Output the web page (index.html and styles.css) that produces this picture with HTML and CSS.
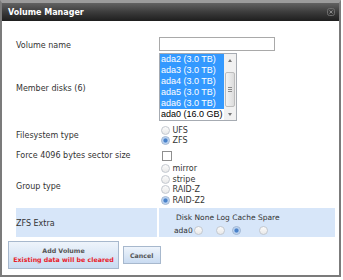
FILE: index.html
```html
<!DOCTYPE html>
<html lang="en">
<head>
    <meta charset="UTF-8">
    <title>Volume Manager</title>
    <link rel="stylesheet" href="styles.css">
</head>
<body>

<div class="window">
    <div class="titlebar">
        <span class="title">Volume Manager</span>
        <svg class="close" width="8" height="8" viewBox="0 0 8 8">
            <rect x="0.5" y="0.5" width="7" height="7" rx="2" fill="none" stroke="#6e6e6e"/>
            <path d="M2.5 2.5 L5.5 5.5 M5.5 2.5 L2.5 5.5" stroke="#8a8a8a" stroke-width="1"/>
        </svg>
    </div>

    <div class="content">
        <div class="form">
            <div class="label">Volume name</div>
            <div class="field"><input class="text" type="text"></div>

            <div class="label">Member disks (6)</div>
            <div class="field">
                <div class="listbox">
                    <div class="options">
                        <div class="option selected">ada2 (3.0 TB)</div>
                        <div class="option selected">ada3 (3.0 TB)</div>
                        <div class="option selected">ada4 (3.0 TB)</div>
                        <div class="option selected">ada5 (3.0 TB)</div>
                        <div class="option selected">ada6 (3.0 TB)</div>
                        <div class="option">ada0 (16.0 GB)</div>
                    </div>
                    <div class="scrollbar">
                        <span class="arrow up"></span>
                        <span class="thumb"><i></i><i></i><i></i></span>
                        <span class="arrow down"></span>
                    </div>
                </div>
            </div>

            <div class="label">Filesystem type</div>
            <div class="field choices fs">
                <label class="choice"><input type="radio" name="fs">UFS</label>
                <label class="choice"><input type="radio" name="fs" checked>ZFS</label>
            </div>

            <div class="label">Force 4096 bytes sector size</div>
            <div class="field"><input class="check" type="checkbox"></div>

            <div class="label group">Group type</div>
            <div class="field choices">
                <label class="choice"><input type="radio" name="group">mirror</label>
                <label class="choice"><input type="radio" name="group">stripe</label>
                <label class="choice"><input type="radio" name="group">RAID-Z</label>
                <label class="choice"><input type="radio" name="group" checked>RAID-Z2</label>
            </div>

            <div class="label extra">ZFS Extra</div>
            <div class="field extra">
                <div class="disk-head">Disk None Log Cache Spare</div>
                <div class="disk-row">
                    <span class="disk">ada0</span>
                    <input type="radio" name="ada0">
                    <input type="radio" name="ada0">
                    <input type="radio" name="ada0" checked>
                    <input type="radio" name="ada0">
                </div>
            </div>
        </div>

        <div class="actions">
            <button class="btn primary" type="button">
                <span>Add Volume</span>
                <span class="warn">Existing data will be cleared</span>
            </button>
            <button class="btn" type="button">Cancel</button>
        </div>
    </div>
</div>

</body>
</html>
```

FILE: styles.css
```css
body {
    margin: 0;
    font-family: "DejaVu Sans", Verdana, sans-serif;
    font-size: 8px;
    color: #333;
    background: #fff;
}
.window {
    width: 337px;
    height: 272px;
    border: 2px solid #7b7b7b;
    border-top: 3px solid #9c9c9c;
    background: #fff;
}
.titlebar {
    height: 18px;
    display: flex;
    align-items: center;
    justify-content: space-between;
    padding: 0 4px 0 6px;
    background: linear-gradient(#626262, #3c3c3c 50%, #1e1e1e);
    color: #fff;
}
.title {
    font-weight: bold;
    font-size: 8px;
}
.content {
    padding: 15px 4px 0 14px;
}
.form {
    display: grid;
    grid-template-columns: 141px 176px;
    column-gap: 2px;
}
.label {
    display: flex;
    align-items: center;
    padding-top: 2px;
}
.label.group {
    padding-top: 4px;
}
.field {
    display: flex;
    flex-direction: column;
    align-items: flex-start;
}
.text {
    box-sizing: border-box;
    width: 116px;
    height: 14px;
    margin: 1px 0;
    border: 1px solid #a9a9a9;
    padding: 0;
}

/* multi select */
.listbox {
    display: flex;
    width: 76px;
    height: 66px;
    margin: 1px 0;
    border: 1px solid #a6abb2;
    font-family: "Liberation Sans", Arial, sans-serif;
    font-size: 9px;
}
.options {
    flex: 1;
}
.option {
    height: 11px;
    line-height: 11px;
    padding-left: 1px;
    color: #000;
}
.option.selected {
    background: #3399ff;
    color: #fff;
}
.scrollbar {
    width: 12px;
    display: flex;
    flex-direction: column;
    align-items: center;
    background: #f1f1f1;
}
.arrow {
    width: 0;
    height: 0;
    border-left: 2px solid transparent;
    border-right: 2px solid transparent;
}
.arrow.up {
    margin: 5px 0 0;
    border-bottom: 3px solid #777;
}
.arrow.down {
    margin: 6px 0 0;
    border-top: 3px solid #777;
}
.thumb {
    box-sizing: border-box;
    width: 10px;
    height: 35px;
    margin-top: 10px;
    border: 1px solid #bdbdbd;
    border-radius: 2px;
    background: linear-gradient(90deg, #f4f4f4, #dcdcdc);
    display: flex;
    flex-direction: column;
    justify-content: center;
    align-items: center;
    gap: 1px;
}
.thumb i {
    width: 4px;
    height: 1px;
    background: #8c8c8c;
}

/* radios and checkbox */
.choices.fs {
    padding-top: 3px;
}
.choice {
    display: flex;
    align-items: center;
    height: 10.6px;
}
input[type="radio"] {
    appearance: none;
    box-sizing: border-box;
    width: 9px;
    height: 9px;
    margin: 0 3px 0 1.5px;
    border: 1px solid #c3c8cf;
    border-radius: 50%;
    background: linear-gradient(#fbfbfb, #e9e9e9);
}
input[type="radio"]:checked {
    border-color: #9db4d2;
    background: radial-gradient(circle, #4a82c9 0 1.6px, #a8c6ec 2.4px, #e2ebf7 4px);
}
.check {
    appearance: none;
    box-sizing: border-box;
    width: 10px;
    height: 10px;
    margin: 5px 0 2px 3px;
    border: 1px solid #8f8f8f;
    background: #fff;
}

/* zfs extra */
.extra {
    margin-top: 2.6px;
    background: #d7e6f9;
}
.field.extra {
    padding: 4px 0 1px 15px;
}
.disk-head {
    height: 12px;
    line-height: 12px;
    padding-left: 2px;
    font-size: 7.5px;
}
.disk-row {
    display: flex;
    align-items: center;
    height: 12px;
    font-size: 7.5px;
}
.disk-row input[type="radio"] {
    margin: 0;
}
.disk-row input:nth-of-type(1) { margin-left: 1px; }
.disk-row input:nth-of-type(2) { margin-left: 13px; }
.disk-row input:nth-of-type(3) { margin-left: 7px; }
.disk-row input:nth-of-type(4) { margin-left: 18.5px; }

/* buttons */
.actions {
    display: flex;
    align-items: center;
    gap: 4px;
    margin: 4px 0 0 -8px;
}
.btn {
    height: 18px;
    padding: 0 6px;
    border: 1px solid #a7b8cd;
    background: linear-gradient(#eef4fb, #c9dbf1);
    font-family: "DejaVu Sans", Verdana, sans-serif;
    font-size: 6.3px;
    font-weight: bold;
    color: #555;
    white-space: nowrap;
}
.btn.primary {
    width: 111px;
    height: 28px;
    padding: 0;
    display: flex;
    flex-direction: column;
    align-items: center;
    justify-content: center;
    line-height: 9px;
}
.warn {
    color: #e8202a;
}
```
